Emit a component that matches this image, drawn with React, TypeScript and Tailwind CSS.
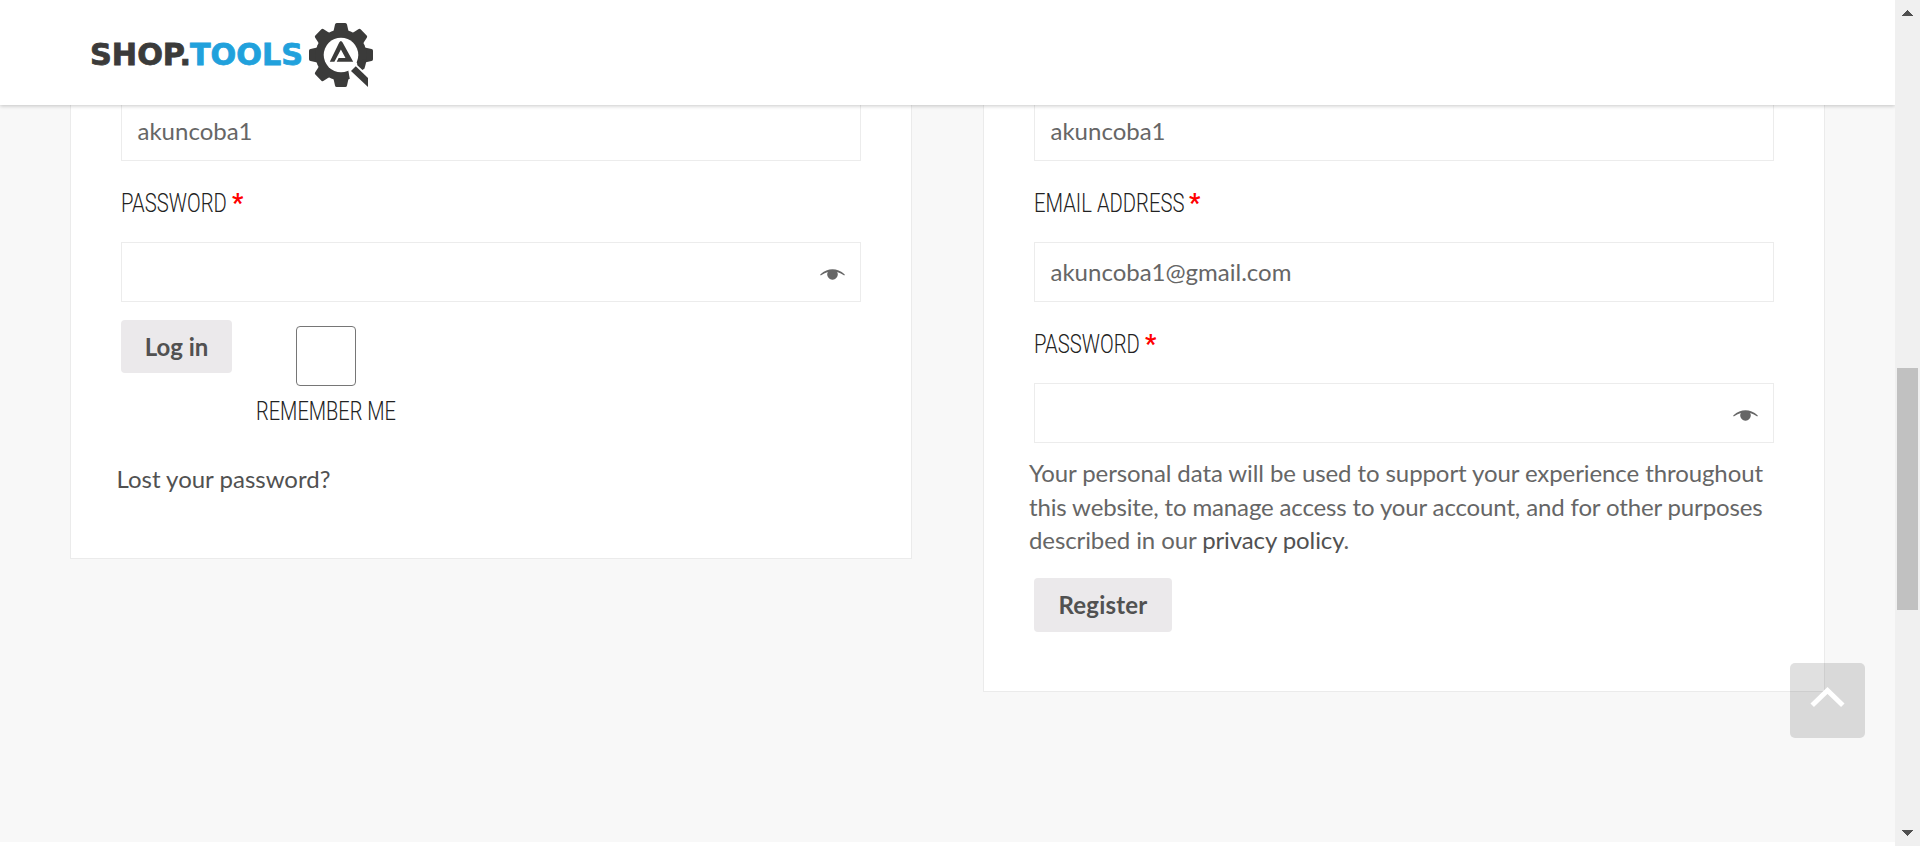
import type { ReactNode } from "react";

const LATO = "font-['Lato',sans-serif]";

function Gear() {
  const teeth = [0, 45, 90, 180, 225, 270, 315];
  return (
    <svg width="68" height="68" viewBox="0 0 68 68" className="-ml-[1.5px] -mt-px block">
      <g fill="#3b3b3a">
        {teeth.map((a) => (
          <path
            key={a}
            d="M25.5 14 L27 8 L28 3.5 Q28.3 2 29.7 2 H38.3 Q39.7 2 40 3.5 L41 8 L42.5 14 Z"
            transform={`rotate(${a} 34 34)`}
          />
        ))}
        <circle cx="34" cy="34" r="25.5" />
      </g>
      <circle cx="34" cy="34" r="17.3" fill="#fff" />
      <path d="M41 48 L49 41 L57 48.5 L66 58 V69 H52 L43 59 Z" fill="#fff" />
      <path d="M50.3 44.3 L50 40 L60 38 L57.5 47.5 L55.5 49 Z" fill="#3b3b3a" />
      <path d="M44 50 L48.8 45.2 L61 57 V66 Z" fill="#3b3b3a" />
      <path d="M22.8 40.8 L32.2 21.6 Q33.9 18.6 35.6 21.6 L46.2 40.8 H29.7 L31.6 37 H38.5 L33.9 28.5 L27.4 40.8 Z" fill="#3b3b3a" />
    </svg>
  );
}

function Logo() {
  return (
    <a className="flex items-center" aria-label="Shop Tools">
      <svg width="218" height="40" viewBox="0 0 218 40" className="block">
        <g fontFamily="DejaVu Sans, sans-serif" fontWeight="700" fontSize="30" strokeWidth="0.8">
          <text x="0" y="29" fill="#3b3b3a" stroke="#3b3b3a" textLength="101" lengthAdjust="spacingAndGlyphs">SHOP.</text>
          <text x="100" y="29" fill="#21a1dc" stroke="#21a1dc" textLength="113" lengthAdjust="spacingAndGlyphs">TOOLS</text>
        </g>
      </svg>
      <Gear />
    </a>
  );
}

function Label({ children, width, scale, required = true }: { children: ReactNode; width: string; scale: string; required?: boolean }) {
  return (
    <div className="flex h-[34px] items-center text-[25px] leading-[34px] text-[#222]">
      <span className={`${width} shrink-0`}>
        <span className={`${scale} inline-block origin-left whitespace-nowrap font-['Roboto',sans-serif] font-light`}>{children}</span>
      </span>
      {required && <span className="mt-[2px] font-['Roboto',sans-serif] text-[25px] font-bold text-[#f00]">*</span>}
    </div>
  );
}

function Field({ value = "", eye = false }: { value?: string; eye?: boolean }) {
  return (
    <div className="flex h-[60px] w-[740px] shrink-0 items-center justify-between border border-[#ececec] bg-white pl-[15.5px] pr-[15px] text-2xl text-[#666]">
      <span>{value}</span>
      {eye && (
        <svg width="25" height="12" viewBox="0 0 25 12" className="mt-[5px]">
          <path d="M.2 5.4 Q12.5 -4.8 24.8 5.4 L24.3 6.4 Q21 4.2 17.2 2.9 A5.3 5.3 0 1 1 7.8 2.9 Q4 4.2 .7 6.4Z" fill="#666" />
        </svg>
      )}
    </div>
  );
}

function Button({ children, size }: { children: ReactNode; size: string }) {
  return (
    <button className={`${size} flex shrink-0 items-center justify-center rounded bg-[#ebe9eb] text-2xl font-bold text-[#515151]`}>
      {children}
    </button>
  );
}

function ScrollBar() {
  return (
    <div className="flex w-[25px] shrink-0 flex-col items-center bg-[#f0f0f0]">
      <svg width="11" height="6" viewBox="0 0 11 6" className="mt-[10px] shrink-0" shapeRendering="crispEdges">
        <path d="M5.5 0 L11 6 H0Z" fill="#505050" />
      </svg>
      <div className="mt-[352px] h-[242px] w-[21px] shrink-0 bg-[#c1c1c1]" />
      <svg width="11" height="6" viewBox="0 0 11 6" className="mt-[220px] shrink-0" shapeRendering="crispEdges">
        <path d="M0 0 H11 L5.5 6Z" fill="#505050" />
      </svg>
    </div>
  );
}

export default function App() {
  return (
    <div className={`${LATO} flex h-[846px] w-[1920px] overflow-hidden bg-white`}>
      <div className="relative flex w-[1895px] shrink-0 flex-col overflow-hidden">
        <header className="z-10 flex h-[105px] shrink-0 items-center bg-white pl-[90px] pt-[6px] shadow-[0_1px_4px_rgba(0,0,0,0.22)]">
          <Logo />
        </header>
        <main className="flex h-[737px] shrink-0 items-start gap-[71px] bg-[#f8f8f8] pl-[70px]">
          <section className="flex h-[454px] w-[842px] flex-col border border-t-0 border-[#ebebeb] bg-white pl-[50px]">
            <div className="-mt-1">
              <Field value="akuncoba1" />
            </div>
            <div className="mt-[25px]">
              <Label width="w-[111px]" scale="scale-x-[0.81]">PASSWORD</Label>
            </div>
            <div className="mt-[22px]">
              <Field eye />
            </div>
            <div className="mt-[18px] flex items-start">
              <Button size="h-[53px] w-[111px]">Log in</Button>
              <label className="ml-6 mt-[6px] flex w-[140px] flex-col items-center">
                <span className="h-[60px] w-[60px] rounded border-[1.5px] border-[#767676] bg-white" />
                <span className="mt-[8px] w-full">
                  <Label width="w-[140px]" scale="scale-x-[0.8]" required={false}>REMEMBER ME</Label>
                </span>
              </label>
            </div>
            <a className="-ml-[4.5px] mt-[34px] text-2xl leading-[33.6px] text-[#515151]">Lost your password?</a>
          </section>
          <section className="flex h-[587px] w-[842px] flex-col border border-t-0 border-[#ebebeb] bg-white pl-[50px]">
            <div className="-mt-1">
              <Field value="akuncoba1" />
            </div>
            <div className="mt-[25px]">
              <Label width="w-[155px]" scale="scale-x-[0.81]">EMAIL ADDRESS</Label>
            </div>
            <div className="mt-[22px]">
              <Field value="akuncoba1@gmail.com" />
            </div>
            <div className="mt-[25px]">
              <Label width="w-[111px]" scale="scale-x-[0.81]">PASSWORD</Label>
            </div>
            <div className="mt-[22px]">
              <Field eye />
            </div>
            <p className="-ml-[5px] mb-[21px] mt-[13px] flex flex-col whitespace-nowrap text-2xl leading-[33.6px] text-[#666]">
              <span className="tracking-[-0.09px]">Your personal data will be used to support your experience throughout</span>
              <span className="tracking-[-0.14px]">this website, to manage access to your account, and for other purposes</span>
              <span className="flex tracking-[-0.1px]">
                <span className="whitespace-pre">described in our </span>
                <a className="text-[#515151]">privacy policy</a>
                <span className="-ml-px">.</span>
              </span>
            </p>
            <Button size="h-[54px] w-[138px] tracking-[0.2px]">Register</Button>
          </section>
        </main>
        <a className="absolute left-[1790px] top-[663px] flex h-[75px] w-[75px] justify-center rounded-[5px] bg-black/12 pt-[23px]" aria-label="Back to top">
          <svg width="37" height="23" viewBox="0 0 37 23">
            <path d="M3.2 19.3 L18.5 4.4 L33.8 19.3" fill="none" stroke="#fff" strokeWidth="5" strokeLinecap="butt" />
          </svg>
        </a>
      </div>
      <ScrollBar />
    </div>
  );
}
